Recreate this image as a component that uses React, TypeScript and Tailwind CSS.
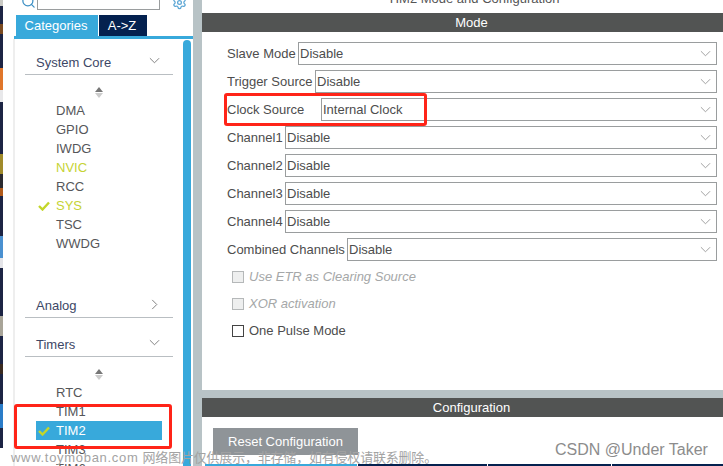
import { Search, Settings } from 'lucide-react'

const systemCore = [
  { name: 'DMA' },
  { name: 'GPIO' },
  { name: 'IWDG' },
  { name: 'NVIC', color: 'text-[#c6d335]' },
  { name: 'RCC' },
  { name: 'SYS', color: 'text-[#c6d335]', checked: true },
  { name: 'TSC' },
  { name: 'WWDG' },
]

const timers = [
  { name: 'RTC' },
  { name: 'TIM1' },
  { name: 'TIM2', checked: true, selected: true },
  { name: 'TIM3' },
  { name: 'TIM6' },
]

const modes = [
  { label: 'Slave Mode', value: 'Disable', width: 'w-[71px]' },
  { label: 'Trigger Source', value: 'Disable', width: 'w-[88px]' },
  { label: 'Clock Source', value: 'Internal Clock', width: 'w-[94px]' },
  { label: 'Channel1', value: 'Disable', width: 'w-[58px]' },
  { label: 'Channel2', value: 'Disable', width: 'w-[58px]' },
  { label: 'Channel3', value: 'Disable', width: 'w-[58px]' },
  { label: 'Channel4', value: 'Disable', width: 'w-[58px]' },
  { label: 'Combined Channels', value: 'Disable', width: 'w-[120px]' },
]

const wallpaper = [
  { h: 'h-[6px]', bg: 'bg-[#c9c9c4]' },
  { h: 'h-[18px]', bg: 'bg-[#1c2444]' },
  { h: 'h-[10px]', bg: 'bg-[#7a4a20]' },
  { h: 'h-[34px]', bg: 'bg-[#1c2444]' },
  { h: 'h-[22px]', bg: 'bg-[#e0762a]' },
  { h: 'h-[12px]', bg: 'bg-[#e8e8ea]' },
  { h: 'h-[52px]', bg: 'bg-[#1c2444]' },
  { h: 'h-[20px]', bg: 'bg-[#a08a2a]' },
  { h: 'h-[14px]', bg: 'bg-[#2a2a30]' },
  { h: 'h-[8px]', bg: 'bg-[#b05a1a]' },
  { h: 'h-[40px]', bg: 'bg-[#1c2444]' },
  { h: 'h-[22px]', bg: 'bg-[#4a90d0]' },
  { h: 'h-[10px]', bg: 'bg-[#e4e4e8]' },
  { h: 'h-[48px]', bg: 'bg-[#1c2444]' },
  { h: 'h-[20px]', bg: 'bg-[#a8a498]' },
  { h: 'h-[28px]', bg: 'bg-[#1c2444]' },
  { h: 'h-[10px]', bg: 'bg-[#3a2a20]' },
  { h: 'h-[30px]', bg: 'bg-[#1c2444]' },
  { h: 'h-[24px]', bg: 'bg-[#2a7cc8]' },
  { h: 'h-[20px]', bg: 'bg-[#1c2444]' },
]

function Chevron({ dir = 'down', className }: { dir?: 'down' | 'right'; className: string }) {
  return (
    <svg viewBox="0 0 12 12" className={className} fill="none" stroke="currentColor" strokeWidth="1">
      {dir === 'down' ? <polyline points="1,3.5 6,8.5 11,3.5" /> : <polyline points="3.5,1 8.5,6 3.5,11" />}
    </svg>
  )
}

function Check({ className }: { className: string }) {
  return (
    <svg viewBox="0 0 12 10" className={className} fill="none" stroke="#c3d62a" strokeWidth="2.4">
      <polyline points="1,5 4.5,8.5 11,1.5" />
    </svg>
  )
}

function Stepper() {
  return (
    <div className="flex flex-col items-center gap-[1px] h-[26px] justify-center pt-[9px]">
      <div className="w-0 h-0 border-x-[4px] border-x-transparent border-b-[5px] border-b-[#777]" />
      <div className="w-0 h-0 border-x-[4px] border-x-transparent border-t-[5px] border-t-[#ccc]" />
    </div>
  )
}

function GroupHeader({ title, open }: { title: string; open?: boolean }) {
  return (
    <div className="mx-[10px] h-[23px] pl-[11px] pr-[13px] flex items-start justify-between border-b border-[#b9bec2]">
      <span className="text-[13px] leading-[22px] text-[#3d4766]">{title}</span>
      {open ? (
        <Chevron className="w-[11px] h-[11px] mt-[3px] text-[#777]" />
      ) : (
        <Chevron dir="right" className="w-[11px] h-[11px] mt-[4px] text-[#777]" />
      )}
    </div>
  )
}

function ListRow({ name, color, checked, selected }: { name: string; color?: string; checked?: boolean; selected?: boolean }) {
  return (
    <div className={`ml-[21px] w-[126px] h-[19px] flex items-center text-[13px] leading-[19px] ${selected ? 'bg-[#38a9db] text-white' : color || 'text-[#555659]'}`}>
      <div className="w-[20px] pl-[2px] shrink-0">{checked && <Check className="w-[12px] h-[10px]" />}</div>
      <span>{name}</span>
    </div>
  )
}

function SelectRow({ label, value, width }: { label: string; value: string; width: string }) {
  return (
    <div className="flex items-center h-[23px] mb-[5px] text-[13px] text-[#4d4d4d]">
      <span className={`${width} shrink-0 whitespace-nowrap`}>{label}</span>
      <div className="flex-1 h-[23px] border border-[#9a9d9e] flex items-center justify-between pl-[1px] pr-[5px]">
        <span>{value}</span>
        <Chevron className="w-[11px] h-[11px] text-[#999]" />
      </div>
    </div>
  )
}

function CheckRow({ label, disabled }: { label: string; disabled?: boolean }) {
  return (
    <div className="flex items-center h-[27px] ml-[5px]">
      <div className={`w-[12px] h-[12px] border ${disabled ? 'border-[#b5b8b9] bg-[#eeefef]' : 'border-[#444] bg-white'}`} />
      <span className={`ml-[5px] text-[13px] ${disabled ? 'italic text-[#a5a7a8]' : 'text-[#4d4d4d]'}`}>{label}</span>
    </div>
  )
}

export default function App() {
  return (
    <div className="relative w-[723px] h-[466px] overflow-hidden flex bg-white font-['Liberation_Sans',Arial,sans-serif]">
      {/* bit of desktop behind the window */}
      <div className="w-[3px] shrink-0 flex flex-col">
        {wallpaper.map((w, i) => (
          <div key={i} className={`${w.h} ${w.bg}`} />
        ))}
      </div>

      {/* left panel */}
      <div className="w-[190px] shrink-0 flex flex-col">
        <div className="h-[15px] flex items-start overflow-hidden">
          <Search className="w-[15px] h-[15px] ml-[18px] -mt-[6px] text-[#3c8fc4]" />
          <div className="ml-[1px] w-[123px] h-[10px] border-x border-b border-[#9a9d9e]" />
          <Settings className="w-[15px] h-[15px] ml-[12px] -mt-[5px] text-[#5aa5d4]" />
        </div>
        <div className="h-[21px] ml-[13px] flex items-stretch text-[13px] text-white">
          <div className="w-[82px] pr-[2px] bg-[#38a9db] flex items-center justify-center">Categories</div>
          <div className="ml-[1px] w-[48px] pr-[2px] bg-[#04214f] flex items-center justify-center">A-&gt;Z</div>
        </div>
        <div className="h-[3px] ml-[11px] bg-[#38a9db]" />
        <div className="flex-1 flex ml-[10px] min-h-0 overflow-hidden">
          <div className="w-[2px] bg-[#eeeeee] shrink-0" />
          <div className="w-[168px] shrink-0 pt-[13px]">
            <GroupHeader title="System Core" open />
            <Stepper />
            {systemCore.map((r) => (
              <ListRow key={r.name} {...r} />
            ))}
            <div className="h-[42px]" />
            <GroupHeader title="Analog" />
            <div className="h-[16px]" />
            <GroupHeader title="Timers" open />
            <Stepper />
            {timers.map((r) => (
              <ListRow key={r.name} {...r} />
            ))}
          </div>
          <div className="w-[8px] shrink-0 mt-[1px] rounded-t-[4px] bg-[#38a9db]" />
        </div>
      </div>

      <div className="w-[9px] shrink-0 bg-[#b8c3c6]" />

      {/* right panel */}
      <div className="flex-1 min-w-0 flex flex-col">
        <div className="h-[13px] pl-[22px] overflow-hidden flex justify-center">
          <span className="text-[13px] leading-[16px] -mt-[9px] text-[#555] whitespace-nowrap">TIM2 Mode and Configuration</span>
        </div>
        <div className="h-[19px] pl-[18px] bg-[#525453] text-white text-[13px] flex items-center justify-center">Mode</div>
        <div className="h-[358px] pt-[10px] pl-[25px] pr-[6px]">
          {modes.map((m) => (
            <SelectRow key={m.label} {...m} />
          ))}
          <div className="-mt-[3px]">
            <CheckRow label="Use ETR as Clearing Source" disabled />
            <CheckRow label="XOR activation" disabled />
            <CheckRow label="One Pulse Mode" />
          </div>
        </div>
        <div className="h-[8px] bg-[#b8c3c6]" />
        <div className="h-[19px] pl-[18px] bg-[#525453] text-white text-[13px] flex items-center justify-center">Configuration</div>
        <div className="flex-1 pt-[11px] pl-[11px] flex flex-col">
          <div className="w-[145px] h-[27px] shrink-0 bg-[#8f9498] text-white text-[13px] flex items-center justify-center">Reset Configuration</div>
        </div>
        <div className="h-[2px] -mt-[2px] ml-[3px] flex gap-[1px]">
          <div className="w-[152px] bg-[#38a9db]" />
          <div className="w-[129px] bg-[#04214f]" />
          <div className="w-[123px] bg-[#04214f]" />
          <div className="flex-1 bg-[#04214f]" />
        </div>
      </div>

      {/* annotations on top of the screenshot */}
      <div className="absolute left-[224px] top-[93px] w-[203px] h-[33px] border-[3px] border-[#ff2418] rounded-[3px]" />
      <div className="absolute left-[14px] top-[404px] w-[158px] h-[45px] border-[3px] border-[#ff2418] rounded-[3px]" />
      <div className="absolute left-[11px] top-[450px] text-[13px] leading-[16px] text-[#a3a3a3] whitespace-nowrap font-['Liberation_Sans','Noto_Sans_CJK_SC',sans-serif]">
        <span className="tracking-[0.7px]">www.toymoban.com</span>
        <span className="ml-[4px] tracking-[-0.2px]">网络图片仅供展示，非存储，如有侵权请联系删除。</span>
      </div>
      <div className="absolute left-[555px] top-[441px] text-[16px] leading-[18px] text-[#8c8c8c] whitespace-nowrap">CSDN @Under Taker</div>
    </div>
  )
}
